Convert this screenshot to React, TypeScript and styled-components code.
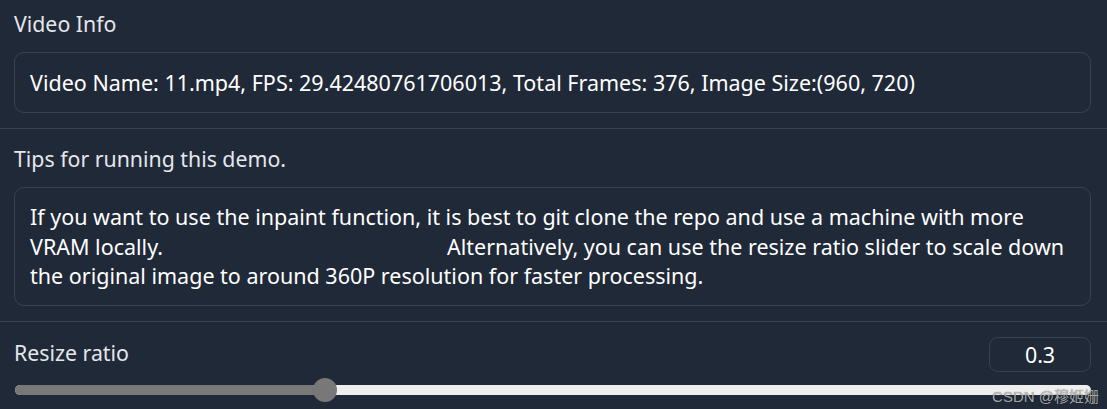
import React from 'react'
import styled, { createGlobalStyle } from 'styled-components'

const GlobalStyle = createGlobalStyle`
  html, body {
    margin: 0;
    padding: 0;
    background: #1f2937;
  }
  body {
    font-family: "Noto Sans", "Open Sans", "Noto Sans CJK SC", sans-serif;
    color: #e5e7eb;
    overflow: hidden;
  }
`

const Page = styled.div`
  position: relative;
  width: 1107px;
  height: 409px;
  background: #1f2937;
  overflow: hidden;
`

const Section = styled.div<{ $top?: number; $bottom?: number; $last?: boolean }>`
  padding: ${p => p.$top ?? 18}px 16px ${p => p.$bottom ?? 15}px 14px;
  border-bottom: ${p => (p.$last ? 'none' : '1px solid #374151')};
`

const Label = styled.div`
  font-size: 21.3px;
  line-height: 24px;
  color: #e5e7eb;
  margin-bottom: 16px;
`

const TextBox = styled.div`
  border: 1px solid #374151;
  border-radius: 10px;
  padding: 14.5px 15px;
  font-size: 21.5px;
  line-height: 29.5px;
  color: #ffffff;
`

const Spacer = styled.span<{ $w: number }>`
  display: inline-block;
  width: ${p => p.$w}px;
`

const SliderHead = styled.div`
  display: flex;
  align-items: center;
  justify-content: space-between;
  height: 35px;
  margin-top: -3px;
`

const SliderLabel = styled.div`
  font-size: 21.3px;
  line-height: 24px;
  color: #e5e7eb;
  margin-top: -3px;
`

const NumberBox = styled.div`
  width: 100px;
  height: 33px;
  border: 1px solid #374151;
  border-radius: 9px;
  display: flex;
  align-items: center;
  justify-content: center;
  font-size: 21.4px;
  color: #ffffff;
`

const Track = styled.div`
  position: relative;
  height: 10px;
  margin-top: 13px;
  margin-left: 1px;
  border-radius: 5px;
  background: #eeeeee;
`

const Fill = styled.div`
  height: 100%;
  border-radius: 5px 0 0 5px;
  background: #787878;
`

const Thumb = styled.div`
  position: absolute;
  top: 50%;
  width: 24px;
  height: 24px;
  margin-left: -12px;
  margin-top: -12px;
  border-radius: 50%;
  background: #787878;
`

const Watermark = styled.div`
  position: absolute;
  right: 8px;
  bottom: 3px;
  font-family: "Liberation Sans", "Noto Sans CJK SC", sans-serif;
  font-size: 15px;
  color: rgba(205, 205, 205, 0.8);
  text-shadow: 0 0 1px rgba(0, 0, 0, 0.6);
`

export default function App() {
  const pct = 0.2885
  return (
    <Page>
      <GlobalStyle />
      <Section $top={12}>
        <Label>Video Info</Label>
        <TextBox>
          Video Name: 11.mp4, FPS: 29.42480761706013, Total Frames: 376, Image Size:(960, 720)
        </TextBox>
      </Section>
      <Section $bottom={15}>
        <Label>Tips for running this demo.</Label>
        <TextBox>
          If you want to use the inpaint function, it is best to git clone the repo and use a machine with more VRAM locally.
          <Spacer $w={284} />
          Alternatively, you can use the resize ratio slider to scale down the original image to around 360P resolution for faster processing.
        </TextBox>
      </Section>
      <Section $last>
        <SliderHead>
          <SliderLabel>Resize ratio</SliderLabel>
          <NumberBox>0.3</NumberBox>
        </SliderHead>
        <Track>
          <Fill style={{ width: `${pct * 100}%` }} />
          <Thumb style={{ left: `${pct * 100}%` }} />
        </Track>
      </Section>
      <Watermark>CSDN @穆姬姗</Watermark>
    </Page>
  )
}
